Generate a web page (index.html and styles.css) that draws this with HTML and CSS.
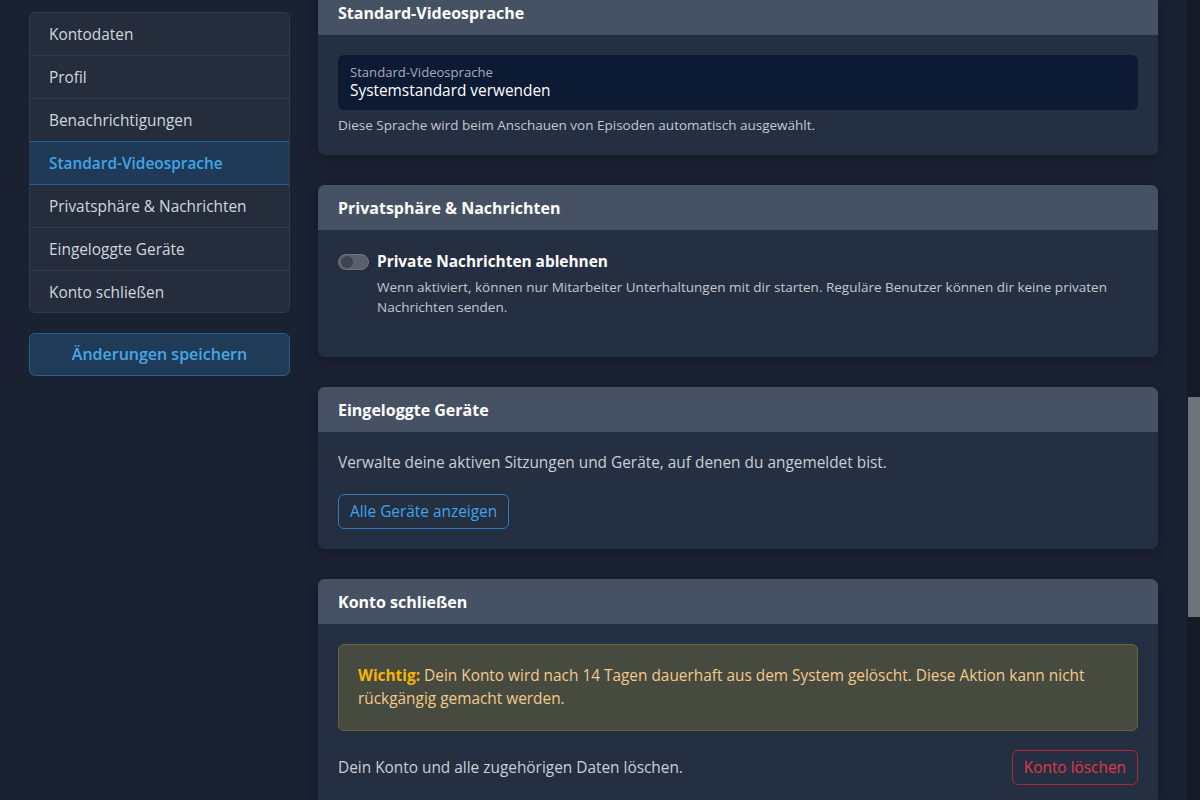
FILE: index.html
```html
<!DOCTYPE html>
<html lang="de">
<head>
  <meta charset="UTF-8">
  <meta name="viewport" content="width=device-width, initial-scale=1.0">
  <title>Einstellungen</title>
  <link rel="stylesheet" href="styles.css">
</head>
<body>

  <div class="page">

    <!-- Sidebar navigation -->
    <aside class="sidebar">
      <nav class="nav-list">
        <a class="nav-item" href="#kontodaten">Kontodaten</a>
        <a class="nav-item" href="#profil">Profil</a>
        <a class="nav-item" href="#benachrichtigungen">Benachrichtigungen</a>
        <a class="nav-item active" href="#videosprache">Standard-Videosprache</a>
        <a class="nav-item" href="#privatsphaere">Privatsphäre &amp; Nachrichten</a>
        <a class="nav-item" href="#geraete">Eingeloggte Geräte</a>
        <a class="nav-item" href="#konto-schliessen">Konto schließen</a>
      </nav>
      <button class="btn btn-save">Änderungen speichern</button>
    </aside>

    <!-- Settings sections -->
    <main class="content">

      <section class="card card-scrolled" id="videosprache">
        <div class="card-header">Standard-Videosprache</div>
        <div class="card-body">
          <div class="select-box">
            <label class="select-label" for="video-lang">Standard-Videosprache</label>
            <div class="select-value" id="video-lang">Systemstandard verwenden</div>
          </div>
          <p class="help-text">Diese Sprache wird beim Anschauen von Episoden automatisch ausgewählt.</p>
        </div>
      </section>

      <section class="card" id="privatsphaere">
        <div class="card-header">Privatsphäre &amp; Nachrichten</div>
        <div class="card-body">
          <div class="switch-group">
            <div class="switch-row">
              <span class="switch"><span class="switch-knob"></span></span>
              <span class="switch-title">Private Nachrichten ablehnen</span>
            </div>
            <p class="switch-desc">Wenn aktiviert, können nur Mitarbeiter Unterhaltungen mit dir starten. Reguläre Benutzer können dir keine privaten Nachrichten senden.</p>
          </div>
        </div>
      </section>

      <section class="card" id="geraete">
        <div class="card-header">Eingeloggte Geräte</div>
        <div class="card-body">
          <p class="text">Verwalte deine aktiven Sitzungen und Geräte, auf denen du angemeldet bist.</p>
          <button class="btn btn-outline-blue">Alle Geräte anzeigen</button>
        </div>
      </section>

      <section class="card" id="konto-schliessen">
        <div class="card-header">Konto schließen</div>
        <div class="card-body">
          <p class="warning"><strong>Wichtig:</strong> Dein Konto wird nach 14 Tagen dauerhaft aus dem System gelöscht. Diese Aktion kann nicht rückgängig gemacht werden.</p>
          <div class="delete-row">
            <span class="text">Dein Konto und alle zugehörigen Daten löschen.</span>
            <button class="btn btn-outline-red">Konto löschen</button>
          </div>
        </div>
      </section>

    </main>

    <!-- page scrollbar -->
    <div class="scrollbar" aria-hidden="true"><div class="scrollbar-thumb"></div></div>

  </div>

</body>
</html>
```

FILE: styles.css
```css
html, body {
  margin: 0;
  height: 100%;
  overflow: hidden;
}

body {
  font-family: "Open Sans", "Noto Sans", sans-serif;
  font-size: 15.4px;
  line-height: 22px;
  color: #c9ced6;
  background-color: #1a2131;
}

p {
  margin: 0;
}

.page {
  display: flex;
  height: 800px;
  padding-left: 29px;
}

/* Sidebar */

.sidebar {
  width: 261px;
  flex-shrink: 0;
  padding-top: 12px;
}

.nav-list {
  display: flex;
  flex-direction: column;
  background-color: #252d3d;
  border: 1px solid #333b4b;
  border-radius: 6px;
  overflow: hidden;
}

.nav-item {
  display: block;
  padding: 11px 19px 9px;
  line-height: 22px;
  color: #d2d6dc;
  text-decoration: none;
  border-bottom: 1px solid #323a4a;
}

.nav-item:last-child {
  border-bottom: none;
  padding-bottom: 8px;
}

.nav-item.active {
  background-color: #1f3a56;
  color: #40a6e6;
  font-weight: 600;
  border-top: 1px solid #2b5f8c;
  border-bottom: 1px solid #2b5f8c;
  margin-top: -1px;
}

.btn {
  font-family: inherit;
  font-size: 15.4px;
  line-height: 21px;
  cursor: pointer;
  border-radius: 6px;
  background: transparent;
}

.btn-save {
  display: block;
  width: 100%;
  margin-top: 20px;
  padding: 10px 12px;
  background-color: #1f3b58;
  border: 1px solid #2b5d8c;
  color: #48a7e8;
  font-size: 16px;
  font-weight: 600;
}

/* Content */

.content {
  width: 840px;
  flex-shrink: 0;
  margin-left: 28px;
  margin-right: 29px;
  display: flex;
  flex-direction: column;
  gap: 30px;
}

.card {
  background-color: #252f42;
  border-radius: 7px;
  box-shadow: 0 2px 12px rgba(0, 0, 0, 0.25);
  overflow: hidden;
  flex-shrink: 0;
}

.card-scrolled {
  margin-top: -10px;
}

.card-header {
  background-color: #465263;
  color: #fff;
  font-size: 16px;
  font-weight: 700;
  padding: 12px 20px 11px;
  line-height: 22px;
}

.card-body {
  padding: 20px;
}

.select-box {
  background-color: #0c1a34;
  border-radius: 6px;
  padding: 9px 12px 8px;
}

.select-label {
  display: block;
  font-size: 13.1px;
  line-height: 16px;
  color: #a7adb8;
}

.select-value {
  color: #fff;
  line-height: 22px;
}

.help-text {
  margin-top: 5px;
  font-size: 13.5px;
  line-height: 20px;
  color: #c2c7d0;
}

.switch-group {
  padding-top: 1px;
  margin-bottom: 19px;
}

.switch-row {
  display: flex;
  align-items: center;
  gap: 8px;
}

.switch {
  box-sizing: content-box;
  width: 25px;
  height: 14px;
  padding: 0 2px;
  border: 1px solid #6f7580;
  border-radius: 8px;
  background-color: #5a606b;
  display: flex;
  align-items: center;
}

.switch-knob {
  width: 12px;
  height: 12px;
  border-radius: 50%;
  background-color: #3f4550;
}

.switch-title {
  color: #fff;
  font-weight: 700;
  line-height: 22px;
}

.switch-desc {
  margin-top: 4px;
  padding-left: 39px;
  padding-bottom: 1px;
  font-size: 13.5px;
  line-height: 20px;
  color: #c2c7d0;
}

.text {
  color: #c9ced6;
}

.btn-outline-blue {
  margin-top: 20px;
  padding: 6px 11px;
  border: 1px solid #2f7ab8;
  color: #3ea5e8;
}

.warning {
  background-color: #474a3f;
  border: 1px solid #6a6438;
  border-radius: 6px;
  padding: 19px 19px 20px;
  line-height: 23px;
  color: #f1cb8c;
}

.warning strong {
  color: #f7b500;
}

.delete-row {
  margin-top: 19px;
  display: flex;
  justify-content: space-between;
  align-items: center;
}

.btn-outline-red {
  padding: 6px 11px;
  border: 1px solid #a82a3c;
  color: #e2374c;
}

/* Scrollbar */

.scrollbar {
  width: 13px;
  flex-shrink: 0;
  background-color: #141a26;
  padding-top: 397px;
}

.scrollbar-thumb {
  margin-left: 1px;
  height: 220px;
  background-color: #6e737c;
}
```
